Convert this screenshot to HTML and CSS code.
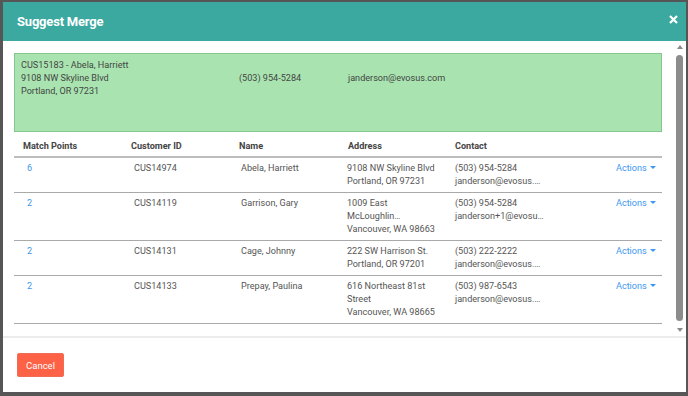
FILE: index.html
```html
<!DOCTYPE html>
<html>
<head>
<meta charset="utf-8">
<link rel="stylesheet" href="styles.css">
</head>
<body>
<div class="backdrop">
  <div class="modal">
    <div class="modal-header">
      <span class="title">Suggest Merge</span>
      <svg class="close" width="9" height="9" viewBox="0 0 9 9"><path d="M1 1L8 8M8 1L1 8" stroke="#fff" stroke-width="2.2" stroke-linecap="butt"/></svg>
    </div>
    <div class="modal-body">
      <div class="content">
        <div class="source">
          <div class="src-col src-main">
            <div>CUS15183 - Abela, Harriett</div>
            <div>9108 NW Skyline Blvd</div>
            <div>Portland, OR 97231</div>
          </div>
          <div class="src-col src-phone"><div>&nbsp;</div><div>(503) 954-5284</div></div>
          <div class="src-col"><div>&nbsp;</div><div>janderson@evosus.com</div></div>
        </div>
        <div class="table">
          <div class="row head">
            <div class="c1">Match Points</div>
            <div class="c2">Customer ID</div>
            <div class="c3">Name</div>
            <div class="c4">Address</div>
            <div class="c5">Contact</div>
            <div class="c6"></div>
          </div>
          <div class="row">
            <div class="c1 link">6</div>
            <div class="c2">CUS14974</div>
            <div class="c3">Abela, Harriett</div>
            <div class="c4"><div>9108 NW Skyline Blvd</div><div>Portland, OR 97231</div></div>
            <div class="c5"><div>(503) 954-5284</div><div>janderson@evosus.…</div></div>
            <div class="c6 link">Actions <span class="caret"></span></div>
          </div>
          <div class="row">
            <div class="c1 link">2</div>
            <div class="c2">CUS14119</div>
            <div class="c3">Garrison, Gary</div>
            <div class="c4"><div>1009 East</div><div>McLoughlin…</div><div>Vancouver, WA 98663</div></div>
            <div class="c5"><div>(503) 954-5284</div><div>janderson+1@evosu…</div></div>
            <div class="c6 link">Actions <span class="caret"></span></div>
          </div>
          <div class="row">
            <div class="c1 link">2</div>
            <div class="c2">CUS14131</div>
            <div class="c3">Cage, Johnny</div>
            <div class="c4"><div>222 SW Harrison St.</div><div>Portland, OR 97201</div></div>
            <div class="c5"><div>(503) 222-2222</div><div>janderson@evosus.…</div></div>
            <div class="c6 link">Actions <span class="caret"></span></div>
          </div>
          <div class="row">
            <div class="c1 link">2</div>
            <div class="c2">CUS14133</div>
            <div class="c3">Prepay, Paulina</div>
            <div class="c4"><div>616 Northeast 81st</div><div>Street</div><div>Vancouver, WA 98665</div></div>
            <div class="c5"><div>(503) 987-6543</div><div>janderson@evosus.…</div></div>
            <div class="c6 link">Actions <span class="caret"></span></div>
          </div>
        </div>
      </div>
      <div class="scrollbar">
        <span class="arrow up"></span>
        <span class="thumb"></span>
        <span class="arrow down"></span>
      </div>
    </div>
    <div class="modal-footer">
      <button class="cancel">Cancel</button>
    </div>
  </div>
</div>
</body>
</html>
```
FILE: styles.css
```css
* { box-sizing: border-box; }
html, body { margin: 0; padding: 0; }
body {
  width: 688px;
  height: 396px;
  overflow: hidden;
  background: #565656;
  font-family: Roboto, "Liberation Sans", sans-serif;
}
.backdrop {
  padding: 2px 2px 4px 3px;
  height: 396px;
}
.modal {
  background: #fff;
  height: 390px;
  display: flex;
  flex-direction: column;
}
.modal-header {
  background: #3ba9a0;
  height: 39px;
  display: flex;
  align-items: center;
  justify-content: space-between;
  padding: 0 8px 0 14px;
  color: #fff;
}
.title {
  font-size: 13px;
  font-weight: 700;
  letter-spacing: -0.2px;
}
.close {
  display: block;
  margin-top: -4px;
}
.modal-body {
  height: 299px;
  display: flex;
  border-bottom: 2px solid #ececec;
}
.content {
  flex: 1;
  padding: 12px 0 0 11px;
  font-size: 9.1px;
  line-height: 13px;
  color: #555;
}
.source {
  background: #a9e4b0;
  border: 1px solid #84c890;
  height: 79px;
  padding: 5px 6px;
  display: flex;
  color: #444;
}
.src-main { width: 218px; }
.src-phone { width: 109px; }
.table {
  margin-top: 5px;
}
.row {
  display: flex;
  padding: 4px 0 4px;
  border-bottom: 1px solid #a9a9a9;
}
.row.head {
  font-weight: 700;
  color: #444;
  padding: 3px 0 3px;
  border-bottom: 2px solid #bdbdbd;
}
.c1 { width: 107px; padding-left: 13px; }
.c2 { width: 107px; padding-left: 13px; }
.c3 { width: 106px; padding-left: 13px; }
.c4 { width: 108px; padding-left: 13px; }
.c5 { width: 110px; padding-left: 13px; }
.c6 { flex: 1; text-align: right; padding-right: 6px; }
.row.head .c1 { padding-left: 9px; }
.row.head .c2 { padding-left: 10px; }
.row.head .c3 { padding-left: 11px; }
.row.head .c4 { padding-left: 14px; }
.link { color: #3d97f0; }
.caret {
  display: inline-block;
  width: 0;
  height: 0;
  border-left: 3px solid transparent;
  border-right: 3px solid transparent;
  border-top: 3px solid #3d97f0;
  vertical-align: 2px;
  margin-left: 1px;
}
.scrollbar {
  width: 11px;
  margin-left: 12px;
  margin-right: 1px;
  display: flex;
  flex-direction: column;
  align-items: center;
  padding: 4px 0 4px;
}
.arrow {
  width: 0;
  height: 0;
  border-left: 3.5px solid transparent;
  border-right: 3.5px solid transparent;
}
.arrow.up { border-bottom: 4px solid #8a8a8a; }
.arrow.down { border-top: 4px solid #8a8a8a; }
.thumb {
  width: 7px;
  flex: 1;
  margin: 6px 0 7px;
  background: #8c8c8c;
  border-radius: 4px;
}
.modal-footer {
  flex: 1;
  padding: 15px 14px;
}
.cancel {
  background: #fd6146;
  border: 1px solid #f26b55;
  color: #fff;
  font-family: Roboto, "Liberation Sans", sans-serif;
  font-size: 9.5px;
  width: 47px;
  height: 24px;
  border-radius: 2px;
  padding: 0;
}
```
